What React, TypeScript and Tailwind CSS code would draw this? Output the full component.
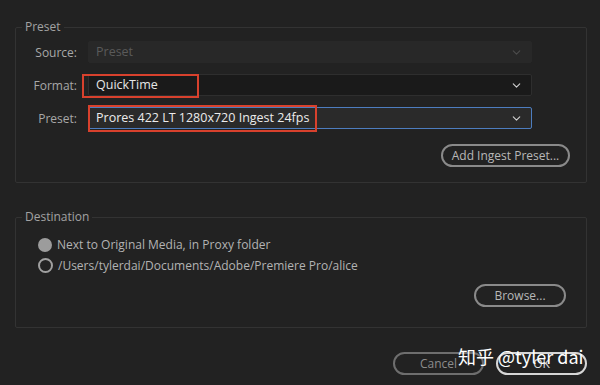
import React from 'react';
import { ChevronDown } from 'lucide-react';

const font = { fontFamily: '"Open Sans", "Noto Sans", sans-serif' };

const Field: React.FC<{ value: string; variant: 'disabled' | 'dark' | 'focus'; children?: React.ReactNode }> = ({
  value,
  variant,
  children,
}) => {
  const box =
    variant === 'disabled'
      ? 'bg-[#282828] border-[#282828] text-[#5a5a5a]'
      : variant === 'dark'
        ? 'bg-[#1a1a1a] border-[#2e2e2e] text-[#e6e6e6]'
        : 'bg-[#2a2a2a] border-[#4d7dbf] text-[#ececec]';
  const chev = variant === 'disabled' ? 'text-[#4c4c4c]' : 'text-[#d0d0d0]';
  return (
    <div className={`relative h-[22px] w-[444px] rounded-[2px] border flex items-center justify-between pl-[7px] pr-[8px] ${box}`}>
      <span className="text-[12.5px] leading-none">{value}</span>
      <ChevronDown className={`h-[13px] w-[13px] ${chev}`} strokeWidth={2} />
      {children}
    </div>
  );
};

const PillButton: React.FC<{ label: string; className?: string }> = ({ label, className = '' }) => (
  <button
    className={`h-[23px] rounded-full border-2 text-[12px] leading-none flex items-center justify-center ${className}`}
  >
    {label}
  </button>
);

export default function App() {
  return (
    <div className="relative w-[600px] h-[385px] bg-[#222222] pt-[18px] pl-[15px] pr-[13px] overflow-hidden" style={font}>
      <fieldset className="border border-[#333333] rounded-[2px] h-[165px] p-0">
        <legend className="ml-[6px] px-[3px] text-[12px] leading-[18px] text-[#a3a3a3]">Preset</legend>
        <div className="pt-[5px] flex flex-col">
          <div className="grid grid-cols-[61px_444px] gap-x-[11px] gap-y-[11px] items-center">
            <span className="text-right text-[12px] leading-[22px] text-[#a8a8a8] translate-y-[1px]">Source:</span>
            <Field value="Preset" variant="disabled" />
            <span className="text-right text-[12px] leading-[22px] text-[#a8a8a8] translate-y-[1px]">Format:</span>
            <Field value="QuickTime" variant="dark">
              <div className="absolute left-[-7px] top-[-1px] w-[117px] h-[24px] border-2 border-[#d8412d]" />
            </Field>
            <span className="text-right text-[12px] leading-[22px] text-[#a8a8a8] translate-y-[1px]">Preset:</span>
            <Field value="Prores 422 LT 1280x720 Ingest 24fps" variant="focus">
              <div className="absolute left-[-1px] top-[-3px] w-[229px] h-[27px] border-2 border-[#d8412d]" />
            </Field>
          </div>
          <div className="flex justify-end pr-[16px] mt-[15px]">
            <PillButton label="Add Ingest Preset..." className="w-[129px] border-[#8a8a8a] text-[#b8b8b8]" />
          </div>
        </div>
      </fieldset>

      <fieldset className="mt-[25px] border border-[#333333] rounded-[2px] h-[120px] p-0">
        <legend className="ml-[6px] px-[3px] text-[12px] leading-[18px] text-[#a3a3a3]">Destination</legend>
        <div className="pt-[8px] pl-[22px] flex flex-col text-[12px] text-[#b3b3b3]">
          <label className="h-[21px] flex items-center gap-[5px]">
            <span className="w-[14px] h-[14px] rounded-full bg-[#9c9c9c]" />
            Next to Original Media, in Proxy folder
          </label>
          <label className="h-[21px] flex items-center gap-[5px]">
            <span className="w-[15px] h-[15px] rounded-full border-2 border-[#a0a0a0]" />
            /Users/tylerdai/Documents/Adobe/Premiere Pro/alice
          </label>
          <div className="flex justify-end pr-[20px] mt-[8px]">
            <PillButton label="Browse..." className="w-[92px] border-[#8a8a8a] text-[#b8b8b8]" />
          </div>
        </div>
      </fieldset>

      <div className="flex justify-end gap-[12px] mt-[24px]">
        <PillButton label="Cancel" className="w-[91px] h-[22px] border-[#6e6e6e] text-[#8c8c8c]" />
        <PillButton label="OK" className="w-[91px] h-[22px] border-[#d6d6d6] text-[#e0e0e0]" />
      </div>

      <div
        className="absolute left-[458px] top-[343px] whitespace-nowrap text-[18px] leading-[26px] text-white"
        style={{ fontFamily: '"Noto Sans CJK SC", "Noto Sans", sans-serif' }}
      >
        知乎 @tyler dai
      </div>
    </div>
  );
}
